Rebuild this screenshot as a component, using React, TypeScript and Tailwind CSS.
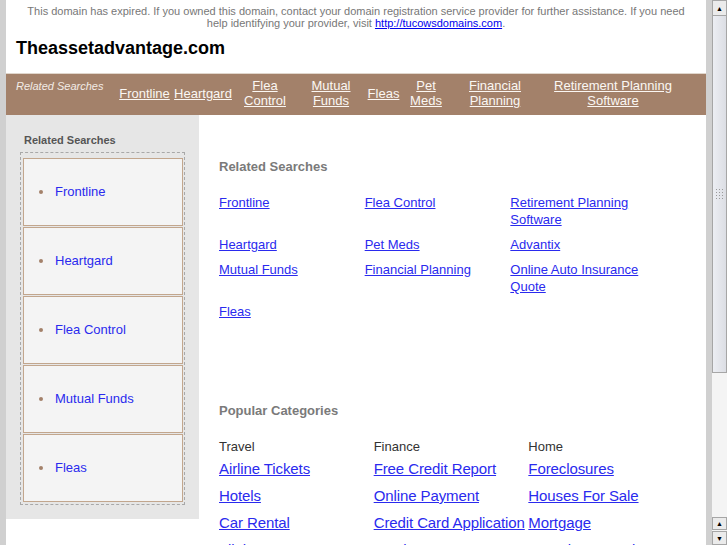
const navLinks = [
  { label: 'Frontline', w: 'w-[55px]' },
  { label: 'Heartgard', w: 'w-[62px]' },
  { label: 'Flea Control', w: 'w-[62px]' },
  { label: 'Mutual Funds', w: 'w-[70px]' },
  { label: 'Fleas', w: 'w-[35px]' },
  { label: 'Pet Meds', w: 'w-[50px]' },
  { label: 'Financial Planning', w: 'w-[88px]' },
  { label: 'Retirement Planning Software', w: 'w-[148px]' },
];

const sideLinks = ['Frontline', 'Heartgard', 'Flea Control', 'Mutual Funds', 'Fleas'];

const related = [
  'Frontline',
  'Flea Control',
  'Retirement Planning Software',
  'Heartgard',
  'Pet Meds',
  'Advantix',
  'Mutual Funds',
  'Financial Planning',
  'Online Auto Insurance Quote',
  'Fleas',
];

const categories = [
  { title: 'Travel', links: ['Airline Tickets', 'Hotels', 'Car Rental', 'Flights'] },
  { title: 'Finance', links: ['Free Credit Report', 'Online Payment', 'Credit Card Application', 'Stocks'] },
  { title: 'Home', links: ['Foreclosures', 'Houses For Sale', 'Mortgage', 'Bargain Properties'] },
];

const Scrollbar = () => (
  <div className="ml-[6px] flex h-full w-[15px] shrink-0 flex-col bg-[#f3f3f3]">
    <div className="flex h-[16px] shrink-0 items-center justify-center border border-[#a6a6a6] bg-[#ebebeb]">
      <span className="text-[7px] leading-none text-black">▲</span>
    </div>
    <div className="flex h-[357px] shrink-0 flex-col items-center justify-center border border-t-0 border-[#a6a6a6] bg-gradient-to-r from-[#eceef3] to-[#dcdee4]">
      <div className="grid grid-cols-3 gap-[2px]">
        {Array.from({ length: 12 }).map((_, i) => (
          <span key={i} className="h-[1px] w-[1px] bg-[#9a9a9a]" />
        ))}
      </div>
    </div>
    <div className="flex-1 bg-[#f4f4f4]" />
    <div className="flex h-[13px] shrink-0 items-center justify-center border border-[#a6a6a6] bg-[#ebebeb]">
      <span className="text-[7px] leading-none text-black">▲</span>
    </div>
    <div className="mt-[1px] flex h-[14px] shrink-0 items-center justify-center border border-[#a6a6a6] bg-[#ebebeb]">
      <span className="text-[7px] leading-none text-black">▼</span>
    </div>
  </div>
);

export default function App() {
  return (
    <div className="flex h-[545px] w-[727px] overflow-hidden bg-[#d0d0d0] font-['Liberation_Sans',Arial,sans-serif]">
      <div className="ml-[6px] flex w-[700px] shrink-0 flex-col bg-white">
        {/* expired notice */}
        <p className="shrink-0 px-[18px] pt-[5px] text-center text-[11px] leading-[12px] text-[#777]">
          This domain has expired. If you owned this domain, contact your domain registration service provider for further assistance. If you need help identifying your provider, visit{' '}
          <a href="#" className="text-[#0000ee] underline">
            http://tucowsdomains.com
          </a>
          .
        </p>

        <h1 className="mt-[8px] shrink-0 pl-[10px] text-[18px] font-bold leading-[22px] text-black">
          Theassetadvantage.com
        </h1>

        {/* top nav */}
        <div className="mt-[14px] flex h-[42px] shrink-0 items-center border-t border-[#e0d6cc] bg-[#a3816a] pb-[3px] pl-[10px]">
          <div className="w-[101px] self-start pt-[5px] text-[11px] italic leading-[15px] text-[#f3ece6]">
            Related Searches
          </div>
          {navLinks.map((l) => (
            <a
              key={l.label}
              href="#"
              className={`${l.w} text-center text-[13px] leading-[15px] text-[#fbf7f3] underline`}
            >
              {l.label}
            </a>
          ))}
        </div>

        <div className="flex shrink-0">
          {/* sidebar */}
          <div className="w-[193px] self-start bg-[#e6e6e6] pb-[14px] pl-[14px] pt-[18px]">
            <h3 className="mb-[5px] pl-[4px] text-[11px] font-bold leading-[14px] text-[#555]">Related Searches</h3>
            <ul className="flex w-[165px] flex-col gap-[1px] border border-dashed border-[#a8a8a8] pb-[2px] pl-[2px] pr-[1px] pt-[5px]">
              {sideLinks.map((s) => (
                <li
                  key={s}
                  className="flex h-[68px] items-center border border-[#c2a68d] bg-[#f4f4f4] pl-[15px] text-[13px] leading-[16px]"
                >
                  <span className="h-[4px] w-[4px] rounded-full bg-[#a3816a]" />
                  <a href="#" className="ml-[12px] text-[#2a2aee]">
                    {s}
                  </a>
                </li>
              ))}
            </ul>
          </div>

          {/* main */}
          <div className="flex-1 pl-[20px] pt-[44px]">
            <h2 className="text-[13px] font-bold leading-[16px] text-[#7a7a7a]">Related Searches</h2>
            <div className="mt-[19px] grid w-[437px] grid-cols-3">
              {related.map((r) => (
                <div key={r} className="mb-[8px] pr-[10px] text-[13px] leading-[17px]">
                  <a href="#" className="text-[#2a2aee] underline">
                    {r}
                  </a>
                </div>
              ))}
            </div>

            <h2 className="mt-[75px] text-[13px] font-bold leading-[16px] text-[#7a7a7a]">Popular Categories</h2>
            <div className="mt-[20px] grid w-[464px] grid-cols-3">
              {categories.map((c) => (
                <div key={c.title} className="flex flex-col">
                  <span className="text-[13px] leading-[16px] text-[#333]">{c.title}</span>
                  <div className="flex flex-col">
                    {c.links.map((l) => (
                      <a
                        key={l}
                        href="#"
                        className="whitespace-nowrap text-[15px] leading-[27px] tracking-[-0.1px] text-[#2a2aee] underline"
                      >
                        {l}
                      </a>
                    ))}
                  </div>
                </div>
              ))}
            </div>
          </div>
        </div>
      </div>
      <Scrollbar />
    </div>
  );
}
